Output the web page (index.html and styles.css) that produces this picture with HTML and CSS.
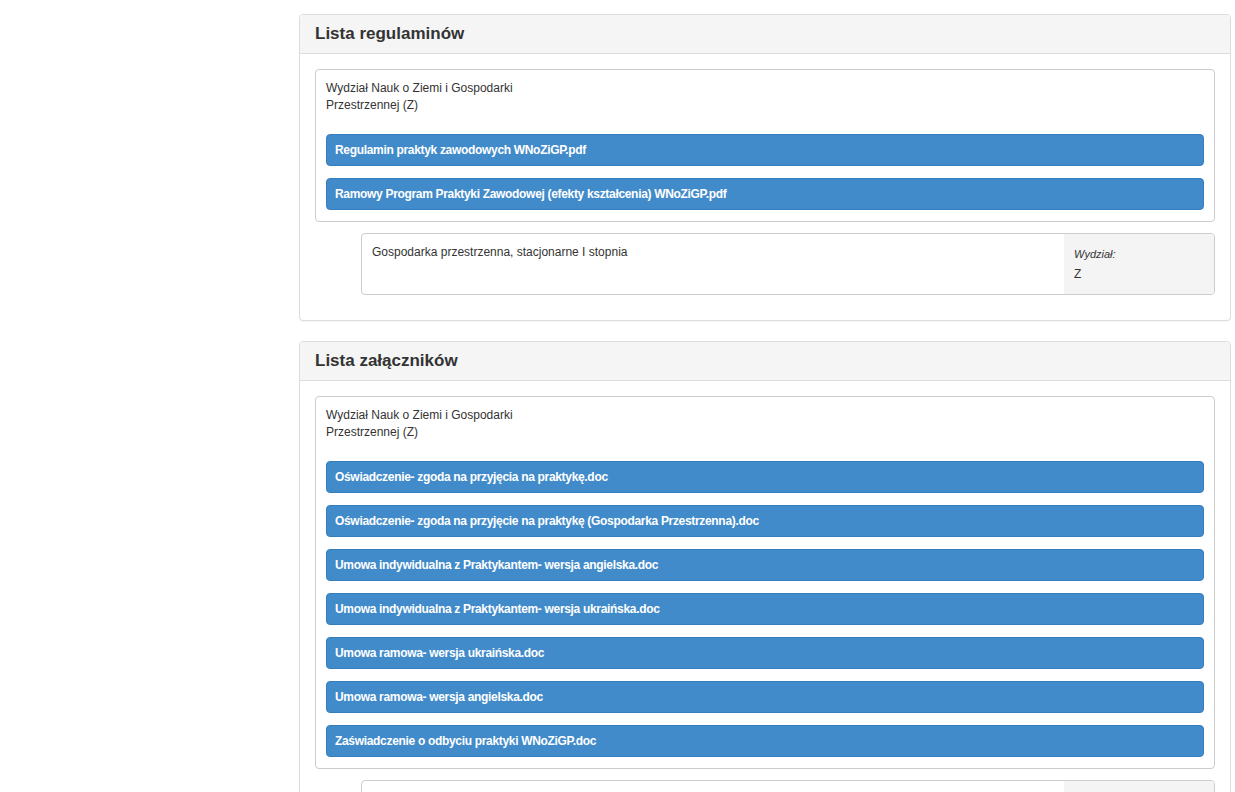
FILE: index.html
```html
<!DOCTYPE html>
<html lang="pl">
<head>
<meta charset="utf-8">
<title>Regulaminy i załączniki</title>
<link rel="stylesheet" href="styles.css">
</head>
<body>
<div class="layout">
  <aside class="sidebar"></aside>
  <main class="main">
    <section class="panel">
      <div class="panel-heading"><h3 class="panel-title">Lista regulaminów</h3></div>
      <div class="panel-body">
        <div class="faculty">
          <div class="faculty-name">Wydział Nauk o Ziemi i Gospodarki Przestrzennej (Z)</div>
          <a class="btn">Regulamin praktyk zawodowych WNoZiGP.pdf</a>
          <a class="btn">Ramowy Program Praktyki Zawodowej (efekty kształcenia) WNoZiGP.pdf</a>
        </div>
        <div class="program">
          <div class="program-name">Gospodarka przestrzenna, stacjonarne I stopnia</div>
          <div class="program-meta">
            <div class="meta-label">Wydział:</div>
            <div class="meta-value">Z</div>
          </div>
        </div>
      </div>
    </section>

    <section class="panel">
      <div class="panel-heading"><h3 class="panel-title">Lista załączników</h3></div>
      <div class="panel-body">
        <div class="faculty">
          <div class="faculty-name">Wydział Nauk o Ziemi i Gospodarki Przestrzennej (Z)</div>
          <a class="btn">Oświadczenie- zgoda na przyjęcia na praktykę.doc</a>
          <a class="btn">Oświadczenie- zgoda na przyjęcie na praktykę (Gospodarka Przestrzenna).doc</a>
          <a class="btn">Umowa indywidualna z Praktykantem- wersja angielska.doc</a>
          <a class="btn">Umowa indywidualna z Praktykantem- wersja ukraińska.doc</a>
          <a class="btn">Umowa ramowa- wersja ukraińska.doc</a>
          <a class="btn">Umowa ramowa- wersja angielska.doc</a>
          <a class="btn">Zaświadczenie o odbyciu praktyki WNoZiGP.doc</a>
        </div>
        <div class="program">
          <div class="program-name">Gospodarka przestrzenna, stacjonarne I stopnia</div>
          <div class="program-meta">
            <div class="meta-label">Wydział:</div>
            <div class="meta-value">Z</div>
          </div>
        </div>
      </div>
    </section>
  </main>
</div>
</body>
</html>
```

FILE: styles.css
```css
html, body {
  margin: 0;
  padding: 0;
  background: #fff;
}
body {
  font-family: "Liberation Sans", Arial, sans-serif;
  font-size: 12px;
  line-height: 17px;
  color: #333;
}
.layout {
  display: grid;
  grid-template-columns: 299px 932px;
  padding-top: 14px;
}
.panel {
  border: 1px solid #ddd;
  border-radius: 4px;
  margin-bottom: 20px;
  background: #fff;
  box-shadow: 0 1px 1px rgba(0,0,0,0.04);
}
.panel-heading {
  background: #f5f5f5;
  border-bottom: 1px solid #ddd;
  border-radius: 3px 3px 0 0;
  padding: 10px 15px;
}
.panel-title {
  margin: 0;
  font-size: 17px;
  line-height: 18px;
  font-weight: bold;
  color: #333;
}
.panel-body {
  padding: 15px 15px 15px;
}
.faculty {
  border: 1px solid #ccc;
  border-radius: 4px;
  padding: 10px 10px 11px;
  display: flex;
  flex-direction: column;
  gap: 12px;
}
.faculty-name {
  max-width: 220px;
  margin-bottom: 8px;
}
.btn {
  display: block;
  height: 30px;
  line-height: 30px;
  padding: 0 8px;
  border: 1px solid #357ebd;
  border-radius: 4px;
  background: #428bca;
  color: #fff;
  font-weight: bold;
  font-size: 12px;
  letter-spacing: -0.32px;
  white-space: nowrap;
  cursor: pointer;
}
.program {
  margin: 11px 0 10px 46px;
  border: 1px solid #ccc;
  border-radius: 4px;
  display: flex;
  min-height: 60px;
  overflow: hidden;
}
.program-name {
  flex: 1;
  padding: 10px 10px 8px;
}
.program-meta {
  width: 130px;
  background: #f4f4f4;
  padding: 11px 10px 8px;
  font-size: 11px;
  line-height: 19px;
}
.meta-label {
  font-style: italic;
  color: #333;
}
.meta-value {
  font-size: 12px;
  line-height: 20px;
}
```
